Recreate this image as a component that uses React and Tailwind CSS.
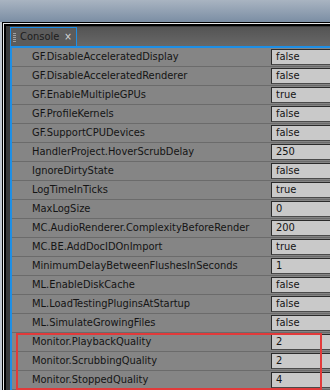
import React from 'react';

const rows = [
  ['GF.DisableAcceleratedDisplay', 'false'],
  ['GF.DisableAcceleratedRenderer', 'false'],
  ['GF.EnableMultipleGPUs', 'true'],
  ['GF.ProfileKernels', 'false'],
  ['GF.SupportCPUDevices', 'false'],
  ['HandlerProject.HoverScrubDelay', '250'],
  ['IgnoreDirtyState', 'false'],
  ['LogTimeInTicks', 'true'],
  ['MaxLogSize', '0'],
  ['MC.AudioRenderer.ComplexityBeforeRender', '200'],
  ['MC.BE.AddDocIDOnImport', 'true'],
  ['MinimumDelayBetweenFlushesInSeconds', '1'],
  ['ML.EnableDiskCache', 'false'],
  ['ML.LoadTestingPluginsAtStartup', 'false'],
  ['ML.SimulateGrowingFiles', 'false'],
  ['Monitor.PlaybackQuality', '2'],
  ['Monitor.ScrubbingQuality', '2'],
  ['Monitor.StoppedQuality', '4'],
];

const Row = ({ name, value }) => (
  <div className="h-[19px] shrink-0 flex items-stretch border-b border-[#6b6b6b] bg-[#858585]">
    <div className="w-[259px] shrink-0 pl-[20px] flex items-center text-[11px] text-[#141414] whitespace-nowrap overflow-hidden">
      {name}
    </div>
    <div className="flex-1 flex items-center py-[1px]">
      <div className="h-[16px] w-full flex items-center pl-[4px] bg-[#c9c9c9] border-t border-l border-b border-t-[#2b2b2b] border-l-[#2b2b2b] border-b-[#4a4a4a] text-[11px] text-[#141414]">
        {value}
      </div>
    </div>
  </div>
);

export default function App() {
  return (
    <div
      className="w-[330px] h-[390px] overflow-hidden flex flex-col bg-[#c3cad2]"
      style={{ fontFamily: '"DejaVu Sans Condensed", "DejaVu Sans", sans-serif' }}
    >
      <div className="h-[22px] shrink-0 bg-gradient-to-b from-[#a9b4c1] to-[#7b8ea4]" />
      <div className="flex-1 ml-[2px] flex flex-col border-t border-l border-black min-h-0">
        <div className="flex-1 flex flex-col border-t border-l border-[#e8e8e8] min-h-0">
          <div className="flex-1 flex flex-col border-t-2 border-l-2 border-black bg-[#3a3a3a] pl-[4px] pt-[1px] min-h-0 relative">
            <div className="h-[19px] shrink-0 flex items-end bg-gradient-to-b from-[#545454] to-[#686868]">
              <div className="h-[19px] w-[67px] flex items-center border-t border-l border-r border-[#1e8fe6] bg-[#5c5c5c] pl-[2px]">
                <div className="flex flex-col gap-[1px] mr-[4px]">
                  {[0, 1, 2, 3, 4].map((i) => (
                    <div key={i} className="w-[3px] h-[1px] bg-[#a0a0a0]" />
                  ))}
                </div>
                <span className="text-[11px] text-[#1c1c1c]">Console</span>
                <span className="ml-[5px] text-[10px] leading-none text-[#d8d8d8]">×</span>
              </div>
            </div>
            <div className="flex-1 flex flex-col border-t-2 border-l-2 border-[#1e8fe6] min-h-0 overflow-hidden">
              {rows.map(([n, v]) => (
                <Row key={n} name={n} value={v} />
              ))}
            </div>
            <div className="absolute left-[10px] top-[307px] w-[306px] h-[57px] border-2 border-[#e23a3a]" />
          </div>
        </div>
      </div>
    </div>
  );
}
